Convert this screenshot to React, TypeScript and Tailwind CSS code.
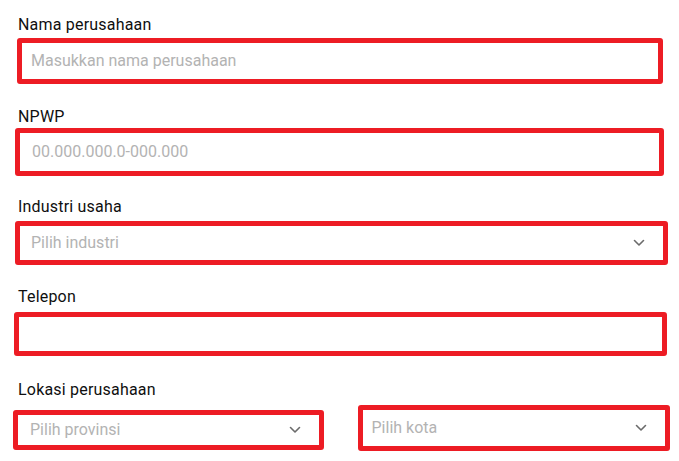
import React from 'react';

const Chevron = () => (
  <svg width="12" height="8" viewBox="0 0 12 8" fill="none" className="shrink-0">
    <path d="M1.5 1.5 L6 6 L10.5 1.5" stroke="#6b6b6b" strokeWidth="1.6" strokeLinecap="round" strokeLinejoin="round" />
  </svg>
);

const boxBase =
  'flex items-center border-[5px] border-[#ed1c24] rounded-[3px] bg-white pl-[9px] pr-[18px] text-[16px] text-[#b3b3b3]';

const labelCls = 'pl-[3px] text-[16px] leading-[20px] font-normal tracking-[0.2px] text-[#0f0f0f]';

export default function App() {
  return (
    <div
      className="w-[679px] h-[461px] bg-white px-[15px] pt-[15px]"
      style={{ fontFamily: 'Roboto, "Noto Sans", sans-serif' }}
    >
      {/* Nama perusahaan */}
      <div className="flex flex-col">
        <label className={labelCls}>Nama perusahaan</label>
        <div className={`${boxBase} mt-[3px] h-[46px] ml-[2px] mr-[1px]`}>
          <span>Masukkan nama perusahaan</span>
        </div>
      </div>

      {/* NPWP */}
      <div className="flex flex-col mt-[23px]">
        <label className={labelCls}>NPWP</label>
        <div className={`${boxBase} mt-[1px] h-[48px] pl-[12px]`}>
          <span>00.000.000.0-000.000</span>
        </div>
      </div>

      {/* Industri usaha */}
      <div className="flex flex-col mt-[21px]">
        <label className={labelCls}>Industri usaha</label>
        <div className={`${boxBase} mt-[4px] h-[44px] pl-[11px] -mr-[4px] justify-between`}>
          <span>Pilih industri</span>
          <Chevron />
        </div>
      </div>

      {/* Telepon */}
      <div className="flex flex-col mt-[22px]">
        <label className={labelCls}>Telepon</label>
        <div className={`${boxBase} mt-[5px] h-[44px] -ml-[1px] -mr-[3px]`} />
      </div>

      {/* Lokasi perusahaan */}
      <div className="flex flex-col mt-[24px]">
        <label className={labelCls}>Lokasi perusahaan</label>
        <div className="grid grid-cols-2 gap-[32px] mt-[5px] items-center">
          <div className={`${boxBase} h-[40px] -ml-[2px] mt-[3px] pl-[12px] justify-between`}>
            <span>Pilih provinsi</span>
            <Chevron />
          </div>
          <div className={`${boxBase} h-[46px] ml-[2px] -mr-[6px] justify-between`}>
            <span>Pilih kota</span>
            <Chevron />
          </div>
        </div>
      </div>
    </div>
  );
}
